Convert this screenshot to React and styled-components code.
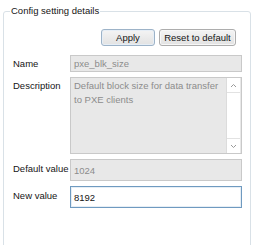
import React from 'react';
import styled, { createGlobalStyle } from 'styled-components';

const GlobalStyle = createGlobalStyle`
  html, body {
    margin: 0;
    padding: 0;
    background: #ffffff;
  }
  body {
    font-family: "Liberation Sans", Arial, sans-serif;
    font-size: 9.5px;
    color: #151515;
  }
`;

const Group = styled.fieldset`
  margin: 3px 0 0 3px;
  width: 248px;
  height: 260px;
  box-sizing: border-box;
  padding: 0 8px 0 9px;
  border: 1px solid #d9e1e7;
  border-radius: 3px;
  min-width: 0;
`;

const Legend = styled.legend`
  margin-left: -3px;
  padding: 0 1px;
  line-height: 16px;
`;

const Toolbar = styled.div`
  display: flex;
  justify-content: flex-end;
  gap: 4px;
  margin-top: 10px;
  padding-right: 6px;
`;

const Button = styled.button`
  height: 17px;
  width: ${p => p.$w}px;
  padding: 0;
  font: inherit;
  line-height: 14px;
  color: #151515;
  background: linear-gradient(#f4f4f4, #e2e2e2);
  border: 1px solid ${p => (p.$primary ? '#9db3c8' : '#adadad')};
  border-radius: 3px;
  box-shadow: inset 0 0 0 1px ${p => (p.$primary ? '#e6eef6' : '#f7f7f7')};
`;

const Form = styled.div`
  display: grid;
  grid-template-columns: 57px 1fr;
  row-gap: 5px;
  margin-top: 9px;
`;

const Label = styled.div`
  line-height: 16px;
  white-space: nowrap;
  margin-top: ${p => p.$top || 0}px;
`;

const Field = styled.div`
  height: ${p => p.$h}px;
  box-sizing: border-box;
  padding: ${p => p.$pad || '2px 0 0 3px'};
  line-height: 15px;
  background: ${p => (p.$active ? '#ffffff' : '#e8e8e8')};
  color: ${p => (p.$active ? '#151515' : '#8c8c8c')};
  border: 1px solid ${p => (p.$active ? '#6f9ac0' : '#c9c9c9')};
  box-shadow: ${p => (p.$active ? 'inset 0 0 0 1px #e6eef5' : 'none')};
`;

const TextArea = styled.div`
  height: 77px;
  box-sizing: border-box;
  display: flex;
  background: #e8e8e8;
  border: 1px solid #c9c9c9;
  color: #8c8c8c;
`;

const AreaText = styled.div`
  flex: 1;
  padding: 1px 0 0 3px;
  line-height: 14px;
`;

const ScrollBar = styled.div`
  width: 13px;
  display: flex;
  flex-direction: column;
  background: #ffffff;
  border-left: 1px solid #dcdcdc;
  margin: 0 1px 0 0;
`;

const Arrow = styled.div`
  height: 14px;
  display: flex;
  align-items: center;
  justify-content: center;
  border-${p => (p.$down ? 'top' : 'bottom')}: 1px solid #e2e2e2;
`;

const Track = styled.div`
  flex: 1;
`;

const Chevron = ({ down }) => (
  <svg width="7" height="5" viewBox="0 0 7 5">
    <polyline
      points={down ? '1,1 3.5,3.5 6,1' : '1,4 3.5,1.5 6,4'}
      fill="none"
      stroke="#9a9a9a"
      strokeWidth="1"
    />
  </svg>
);

export default function App() {
  return (
    <>
      <GlobalStyle />
      <Group>
        <Legend>Config setting details</Legend>
        <Toolbar>
          <Button $w={54} $primary>Apply</Button>
          <Button $w={77}>Reset to default</Button>
        </Toolbar>
        <Form>
          <Label $top={1}>Name</Label>
          <Field $h={17} $pad="0 0 0 3px">pxe_blk_size</Field>

          <Label $top={1}>Description</Label>
          <TextArea>
            <AreaText>Default block size for data transfer to PXE clients</AreaText>
            <ScrollBar>
              <Arrow><Chevron /></Arrow>
              <Track />
              <Arrow $down><Chevron down /></Arrow>
            </ScrollBar>
          </TextArea>

          <Label $top={2}>Default value</Label>
          <Field $h={22} $pad="3px 0 0 3px">1024</Field>

          <Label $top={2}>New value</Label>
          <Field $h={22} $pad="3px 0 0 3px" $active>8192</Field>
        </Form>
      </Group>
    </>
  );
}
